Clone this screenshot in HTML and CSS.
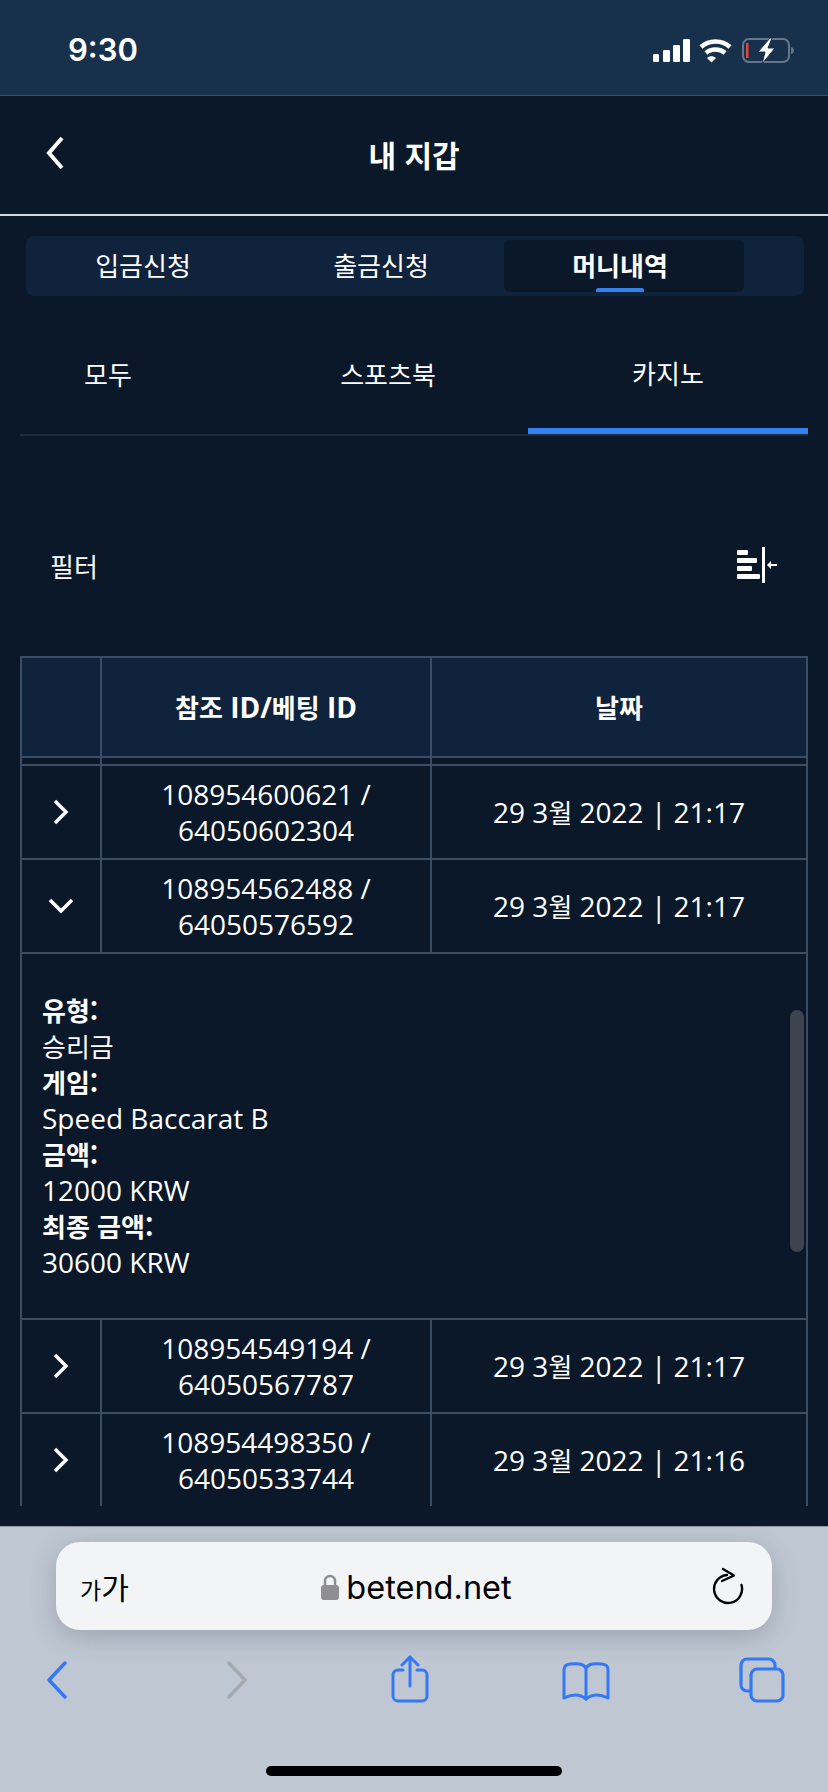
FILE: index.html
```html
<!DOCTYPE html>
<html lang="ko">
<head>
<meta charset="utf-8">
<title>내 지갑</title>
<link rel="stylesheet" href="styles.css">
</head>
<body>
<div class="page">
  <div class="status">
    <span class="clock">9:30</span>
    <svg class="status-icons" width="142" height="26" viewBox="0 0 142 26">
      <g fill="#fff">
        <rect x="0" y="16" width="6" height="8" rx="1.2"/>
        <rect x="10" y="12" width="7" height="12" rx="1.2"/>
        <rect x="20" y="7" width="7" height="17" rx="1.2"/>
        <rect x="30" y="1" width="7" height="23" rx="1.2"/>
        <path d="M63 20l-4.500 4.500-4.500-4.500c2.500-2.300 6.500-2.300 9 0z"/>
      </g>
      <g fill="none" stroke="#fff" stroke-width="4.500">
        <path d="M48 9c8-7.500 21-7.500 29 0"/>
        <path d="M53 15c5-4.600 14-4.600 19 0"/>
      </g>
      <rect x="90" y="1" width="46" height="23" rx="6" fill="none" stroke="#66778a" stroke-width="2"/>
      <path d="M138 9c2 .5 3 2 3 3.500s-1 3-3 3.500z" fill="#66778a"/>
      <rect x="93" y="5" width="2.500" height="15" fill="#e2463c"/>
      <path d="M117 0l-12 14h7l-3 12 13-16h-7l4-10z" fill="#fff" stroke="#17304c" stroke-width="1"/>
    </svg>
  </div>

  <header class="topbar">
    <svg class="back" width="20" height="34" viewBox="0 0 20 34"><path d="M17 2L4 17l13 15" fill="none" stroke="#fff" stroke-width="4"/></svg>
    <h1 class="title">내 지갑</h1>
  </header>

  <nav class="tabs">
    <div class="tab">입금신청</div>
    <div class="tab">출금신청</div>
    <div class="tab tab-active">머니내역<span class="tab-mark"></span></div>
  </nav>

  <div class="subtabs">
    <div class="subtab subtab-first">모두</div>
    <div class="subtab">스포츠북</div>
    <div class="subtab subtab-active">카지노</div>
  </div>

  <div class="filter">
    <span>필터</span>
    <svg width="40" height="36" viewBox="0 0 40 36">
      <g fill="#fff">
        <rect x="0" y="3" width="11" height="5" rx="1"/>
        <rect x="0" y="11" width="20" height="5" rx="1"/>
        <rect x="0" y="19" width="15" height="5" rx="1"/>
        <rect x="0" y="27" width="23" height="5" rx="1"/>
        <rect x="25" y="0" width="3" height="36"/>
        <rect x="32" y="17" width="8" height="2"/>
        <path d="M30 18l4-4v8z"/>
      </g>
    </svg>
  </div>

  <div class="table">
    <div class="row row-head">
      <div class="cell"></div>
      <div class="cell"><span><span class="kr">참조</span> ID/<span class="kr">베팅</span> ID</span></div>
      <div class="cell"><span class="kr">날짜</span></div>
    </div>
    <div class="row row-strip">
      <div class="cell"></div>
      <div class="cell"></div>
      <div class="cell"></div>
    </div>
    <div class="row">
      <div class="cell"><svg width="16" height="26" viewBox="0 0 16 26"><path d="M2 2l11 11L2 24" fill="none" stroke="#fff" stroke-width="3.500"/></svg></div>
      <div class="cell"><span>108954600621 /<br>64050602304</span></div>
      <div class="cell"><span>29 3<span class="kr">월</span> 2022 | 21:17</span></div>
    </div>
    <div class="row">
      <div class="cell"><svg width="26" height="16" viewBox="0 0 26 16"><path d="M2 2l11 11L24 2" fill="none" stroke="#fff" stroke-width="3.500"/></svg></div>
      <div class="cell"><span>108954562488 /<br>64050576592</span></div>
      <div class="cell"><span>29 3<span class="kr">월</span> 2022 | 21:17</span></div>
    </div>
    <div class="detail">
      <b class="kr">유형:</b><br><span class="kr">승리금</span><br>
      <b class="kr">게임:</b><br>Speed Baccarat B<br>
      <b class="kr">금액:</b><br>12000 KRW<br>
      <b class="kr">최종 금액:</b><br>30600 KRW
      <span class="scrollbar"></span>
    </div>
    <div class="row">
      <div class="cell"><svg width="16" height="26" viewBox="0 0 16 26"><path d="M2 2l11 11L2 24" fill="none" stroke="#fff" stroke-width="3.500"/></svg></div>
      <div class="cell"><span>108954549194 /<br>64050567787</span></div>
      <div class="cell"><span>29 3<span class="kr">월</span> 2022 | 21:17</span></div>
    </div>
    <div class="row">
      <div class="cell"><svg width="16" height="26" viewBox="0 0 16 26"><path d="M2 2l11 11L2 24" fill="none" stroke="#fff" stroke-width="3.500"/></svg></div>
      <div class="cell"><span>108954498350 /<br>64050533744</span></div>
      <div class="cell"><span>29 3<span class="kr">월</span> 2022 | 21:16</span></div>
    </div>
  </div>

  <div class="safari">
    <div class="urlbar">
      <span class="aa"><small>가</small>가</span>
      <span class="url">
        <svg width="18" height="26" viewBox="0 0 18 26"><path d="M4 12V7a5 5 0 0 1 10 0v5" fill="none" stroke="#8e8e93" stroke-width="2.500"/><rect x="0" y="11" width="18" height="15" rx="3" fill="#8e8e93"/></svg>
        <span>betend.net</span>
      </span>
      <svg class="reload" width="32" height="38" viewBox="0 0 32 38"><path d="M15 8A14 14 0 1 0 29.500 18" fill="none" stroke="#000" stroke-width="2.400" stroke-linecap="round"/><path d="M11 2l11 6.500L10 14" fill="none" stroke="#000" stroke-width="2.400" stroke-linecap="round" stroke-linejoin="round"/></svg>
    </div>
    <div class="toolbar">
      <svg class="t-back" width="20" height="48" viewBox="0 0 20 48"><path d="M18 8L2 25l16 17" fill="none" stroke="#3478f6" stroke-width="3.500" stroke-linecap="round" stroke-linejoin="round"/></svg>
      <svg class="t-fwd" width="20" height="48" viewBox="0 0 20 48"><path d="M2 8l16 17L2 42" fill="none" stroke="#a5a9af" stroke-width="3.500" stroke-linecap="round" stroke-linejoin="round"/></svg>
      <svg class="t-share" width="38" height="48" viewBox="0 0 38 48"><g fill="none" stroke="#3478f6" stroke-width="3" stroke-linecap="round" stroke-linejoin="round"><path d="M12 15H7a5 5 0 0 0-5 5v21a5 5 0 0 0 5 5h24a5 5 0 0 0 5-5V20a5 5 0 0 0-5-5h-5"/><path d="M19 31V2"/><path d="M11 10l8-8 8 8"/></g></svg>
      <svg class="t-book" width="48" height="48" viewBox="0 0 48 48"><g fill="none" stroke="#3478f6" stroke-width="3" stroke-linecap="round" stroke-linejoin="round"><path d="M24 13C21 8 15 8.500 8 9c-4 .3-6 2-6 6v28c8-4 16-4 22 1 6-5 14-5 22-1V15c0-4-2-5.700-6-6-7-.5-13-1-16 4z"/><path d="M24 13v31"/></g></svg>
      <svg class="t-tabs" width="46" height="48" viewBox="0 0 46 48"><g fill="none" stroke="#3478f6" stroke-width="3.200"><path d="M11 36H8a6 6 0 0 1-6-6V10a6 6 0 0 1 6-6h22a6 6 0 0 1 6 6v3"/><rect x="12" y="14" width="32" height="32" rx="6"/></g></svg>
    </div>
    <div class="home"></div>
  </div>
</div>
</body>
</html>
```

FILE: styles.css
```css
* { box-sizing: border-box; }

html, body { margin: 0; padding: 0; }

body {
  width: 828px;
  height: 1792px;
  overflow: hidden;
  background: #0a1829;
  color: #fff;
  font-family: "Open Sans", "Noto Sans CJK KR", sans-serif;
  font-size: 28px;
  font-weight: 400;
}

.page {
  display: flex;
  flex-direction: column;
  width: 828px;
  height: 1792px;
}

.kr {
  font-family: "Noto Sans CJK KR", sans-serif;
  font-size: 26px;
  font-weight: 400;
}

b.kr, .row-head .kr { font-weight: 700; }

.status {
  display: flex;
  align-items: center;
  justify-content: space-between;
  height: 96px;
  padding: 0 33px 0 68px;
  background: #17304c;
  border-bottom: 1px solid #3c4d62;
}

.clock {
  margin-top: 4px;
  font-family: Inter, Roboto, sans-serif;
  font-size: 31px;
  font-weight: 600;
  line-height: 1;
}

.status-icons { display: block; margin-top: 7px; }

.topbar {
  position: relative;
  display: flex;
  align-items: center;
  justify-content: center;
  height: 120px;
  border-bottom: 2px solid #d4d5d7;
}

.back {
  position: absolute;
  left: 45px;
  top: 40px;
}

.title {
  margin: -2px 0 0;
  font-family: "Noto Sans CJK KR", sans-serif;
  font-size: 30px;
  font-weight: 700;
}

.tabs {
  display: grid;
  grid-template-columns: 238px 238px 240px;
  height: 60px;
  margin: 20px 24px 0 26px;
  padding: 4px 0 4px 2px;
  background: #10233d;
  border-radius: 8px;
}

.tab {
  position: relative;
  display: flex;
  align-items: center;
  justify-content: center;
  padding: 0 8px 4px 0;
  font-family: "Noto Sans CJK KR", sans-serif;
  font-size: 26px;
  border-radius: 6px;
}

.tab-active {
  background: #0a1829;
  font-weight: 700;
}

.tab-mark {
  position: absolute;
  left: 92px;
  bottom: 0;
  width: 48px;
  height: 4px;
  background: #3380ee;
  border-radius: 2px 2px 0 0;
}

.subtabs {
  display: flex;
  height: 120px;
  margin: 20px 20px 0;
  overflow: hidden;
  border-bottom: 2px solid #1f2c3c;
}

.subtab {
  flex: 0 0 280px;
  display: flex;
  align-items: center;
  justify-content: center;
  height: 118px;
  padding-bottom: 3px;
  font-family: "Noto Sans CJK KR", sans-serif;
  font-size: 26px;
}

.subtab-first { margin-left: -52px; }

.subtab-active { border-bottom: 6px solid #3380ee; padding-bottom: 0; }

.filter {
  display: flex;
  align-items: center;
  justify-content: space-between;
  height: 36px;
  margin: 111px 0 73px;
  padding: 0 51px 0 50px;
  font-family: "Noto Sans CJK KR", sans-serif;
  font-size: 26px;
}

.table {
  height: 850px;
  margin: 0 20px;
  overflow: hidden;
  border-top: 2px solid #3a4d63;
}

.row {
  display: grid;
  grid-template-columns: 80px 330px 1fr;
  height: 94px;
  border-left: 2px solid #3a4d63;
  border-right: 2px solid #3a4d63;
  border-bottom: 2px solid #3a4d63;
}

.row-head {
  height: 100px;
  background: #10233d;
  font-weight: 700;
}

.row-strip { height: 8px; }

.cell {
  display: flex;
  align-items: center;
  justify-content: center;
  line-height: 36px;
  text-align: center;
  border-right: 2px solid #3a4d63;
}

.cell:last-child { border-right: 0; }

.detail {
  position: relative;
  height: 366px;
  padding: 38px 20px;
  line-height: 36px;
  border-left: 2px solid #3a4d63;
  border-right: 2px solid #3a4d63;
  border-bottom: 2px solid #3a4d63;
}

.scrollbar {
  position: absolute;
  top: 56px;
  right: 2px;
  width: 14px;
  height: 242px;
  background: #3d444e;
  border-radius: 7px;
}

.safari {
  flex: 1;
  margin-top: 20px;
  padding-top: 15px;
  background: #bfc8d2;
  border-top: 1px solid #8f98a2;
  color: #000;
}

.urlbar {
  display: grid;
  grid-template-columns: 1fr auto 1fr;
  align-items: center;
  width: 716px;
  height: 88px;
  margin-left: 56px;
  padding: 0 28px 0 24px;
  background: #f2f4f6;
  border-radius: 24px;
  box-shadow: 0 6px 24px rgba(60, 70, 85, 0.28);
}

.aa {
  font-family: "Noto Sans CJK KR", sans-serif;
  font-size: 30px;
  line-height: 1;
}

.aa small { font-size: 23px; }

.url {
  display: flex;
  align-items: center;
  gap: 7px;
  margin: 2px 0 0 9px;
  font-family: Inter, Roboto, sans-serif;
  font-size: 32.500px;
}

.reload { justify-self: end; }

.toolbar {
  display: flex;
  height: 48px;
  margin-top: 25px;
}

.toolbar svg { display: block; }

.t-back { margin-left: 47px; }
.t-fwd { margin-left: 160px; }
.t-share { margin-left: 144px; }
.t-book { margin-left: 133px; }
.t-tabs { margin-left: 129px; }

.home {
  width: 296px;
  height: 10px;
  margin: 63px 0 0 266px;
  background: #000;
  border-radius: 5px;
}
```
